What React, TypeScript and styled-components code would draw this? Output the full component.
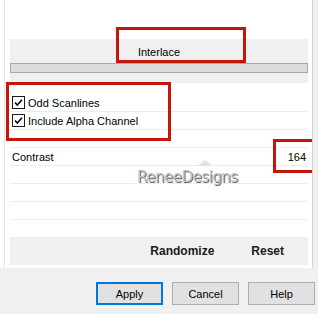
import { createGlobalStyle, styled } from 'styled-components'

const Global = createGlobalStyle`
  html, body {
    margin: 0;
    padding: 0;
    background: #f0f0f0;
    font-family: "Liberation Sans", Arial, sans-serif;
    font-size: 11px;
    color: #000;
  }
`

const rows = [
  { kind: 'check', label: 'Odd Scanlines' },
  { kind: 'check', label: 'Include Alpha Channel' },
  { kind: 'empty' },
  { kind: 'value', label: 'Contrast', value: '164' },
  { kind: 'empty' },
  { kind: 'empty' },
  { kind: 'empty' }
]

const CheckIcon = () => (
  <svg width="13" height="13" viewBox="0 0 13 13">
    <rect x="0.5" y="0.5" width="12" height="12" fill="#fff" stroke="#1a1a1a" />
    <path d="M3 6.5 L5.3 9 L10 3.8" fill="none" stroke="#000" strokeWidth="1.6" />
  </svg>
)

const App = () => {
  return (
    <>
      <Global />
      <Panel>
        <Frame>
          <Header>Interlace</Header>
          <Bar />
          <HeaderTail />
          <Rows>
            {rows.map((r, i) => (
              <Row key={i}>
                {r.kind === 'check' && (
                  <CheckLabel>
                    <CheckIcon />
                    {r.label}
                  </CheckLabel>
                )}
                {r.kind === 'value' && (
                  <>
                    <span>{r.label}</span>
                    <span>{r.value}</span>
                  </>
                )}
              </Row>
            ))}
          </Rows>
          <ActionBand>
            <BandButton>Randomize</BandButton>
            <BandButton>Reset</BandButton>
          </ActionBand>
        </Frame>
        <Mark $x={116} $y={27} $w={130} $h={36} />
        <Mark $x={6} $y={82} $w={165} $h={59} />
        <Mark $x={273} $y={139} $w={60} $h={34} />
        <Watermark>
          <Peak />
          ReneeDesigns
        </Watermark>
      </Panel>
      <Footer>
        <DialogButton $primary>Apply</DialogButton>
        <DialogButton>Cancel</DialogButton>
        <DialogButton>Help</DialogButton>
      </Footer>
    </>
  )
}
export default App

const Panel = styled.div`
  position: relative;
  width: 313px;
  height: 268px;
  background: #fff;
  border-right: 1px solid #d2d2d2;
  box-sizing: border-box;
  display: flex;
  overflow: hidden;
`

const Frame = styled.div`
  margin-left: 4px;
  border-left: 1px solid #e6e6e6;
  padding: 39px 4px 3px 5px;
  flex: 1;
  display: flex;
  flex-direction: column;
`

const Header = styled.div`
  height: 24px;
  background: #f0f0f0;
  display: flex;
  align-items: center;
  justify-content: center;
  padding-top: 1px;
  box-sizing: border-box;
`

const Bar = styled.div`
  height: 10px;
  box-sizing: border-box;
  background: #dcdcdc;
  border: 1px solid #a8a8a8;
`

const HeaderTail = styled.div`
  height: 10px;
  background: #f0f0f0;
  margin-bottom: 11px;
`

const Rows = styled.div`
  display: flex;
  flex-direction: column;
  margin-bottom: 17px;
`

const Row = styled.div`
  height: 18px;
  box-sizing: border-box;
  border-bottom: 1px solid #ececec;
  display: flex;
  align-items: center;
  justify-content: space-between;
  padding: 0 2px;
`

const CheckLabel = styled.label`
  display: flex;
  align-items: center;
  gap: 3px;
  svg {
    display: block;
  }
`

const ActionBand = styled.div`
  height: 28px;
  background: #f0f0f0;
  display: flex;
  align-items: center;
  justify-content: flex-end;
  gap: 37px;
  padding-right: 24px;
`

const BandButton = styled.span`
  font-size: 12px;
  font-weight: bold;
  color: #1a1a1a;
`

const Mark = styled.div<{ $x: number, $y: number, $w: number, $h: number }>`
  position: absolute;
  left: ${p => p.$x}px;
  top: ${p => p.$y}px;
  width: ${p => p.$w}px;
  height: ${p => p.$h}px;
  box-sizing: border-box;
  border: 3px solid #c4170c;
`

const Watermark = styled.div`
  position: absolute;
  left: 137px;
  top: 168px;
  font-family: "DejaVu Sans", sans-serif;
  font-size: 15px;
  letter-spacing: -0.5px;
  color: #c4c4c4;
  text-shadow: 1px 1px 0 #6a6a6a, -1px -1px 0 #fff;
`

const Peak = styled.span`
  position: absolute;
  left: 60px;
  top: -8px;
  width: 0;
  height: 0;
  border-left: 8px solid transparent;
  border-right: 8px solid transparent;
  border-bottom: 6px solid #e2e2e2;
`

const Footer = styled.div`
  height: 46px;
  display: flex;
  justify-content: flex-end;
  align-items: flex-start;
  gap: 9px;
  padding: 14px 3px 0 0;
  box-sizing: border-box;
`

const DialogButton = styled.button<{ $primary?: boolean }>`
  width: 67px;
  height: 23px;
  font-family: "Liberation Sans", Arial, sans-serif;
  font-size: 11px;
  color: #000;
  background: #e1e1e1;
  border: ${p => (p.$primary ? '2px solid #0078d7' : '1px solid #adadad')};
  padding: 0;
  margin: 0;
`
